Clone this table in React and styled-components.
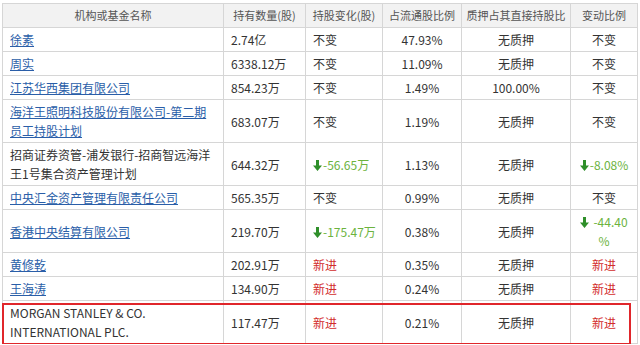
import React from "react";
import styled, { createGlobalStyle } from "styled-components";

const Global = createGlobalStyle`
  html, body { margin: 0; padding: 0; background: #fff; }
  body { font-family: "Microsoft YaHei", "Noto Sans CJK SC", "Noto Sans", sans-serif; }
`;

const Wrap = styled.div`
  position: relative;
  width: 635px;
  margin: 3px 0 0 2px;
`;

const Table = styled.table`
  width: 635px;
  table-layout: fixed;
  border-collapse: collapse;
  font-size: 12px;
  color: #333;
`;

const Th = styled.th`
  background: #f2f2f2;
  color: #555;
  font-weight: normal;
  font-size: 11px;
  border: 1px solid #d6d6d6;
  padding: 2px 2px;
  line-height: 19px;
  text-align: center;
  white-space: nowrap;
`;

const Td = styled.td`
  border: 1px solid #d6d6d6;
  padding: 2px ${(p) => (p.$align === "left" ? "7px" : "2px")};
  line-height: 19px;
  text-align: ${(p) => p.$align || "center"};
  white-space: ${(p) => (p.$nowrap ? "nowrap" : "normal")};
  color: ${(p) => (p.$tone === "red" ? "#d22c2c" : p.$tone === "green" ? "#6cb33e" : "#333")};
  vertical-align: middle;
`;

const NameLink = styled.a`
  color: #2a5ea8;
  text-decoration: underline;
  cursor: pointer;
`;

const Highlight = styled.div`
  position: absolute;
  left: 0;
  right: 6px;
  bottom: -1px;
  height: 42px;
  border: 2px solid #e0262b;
  box-sizing: border-box;
  pointer-events: none;
`;

const ArrowSvg = styled.svg`
  display: inline-block;
  vertical-align: -1px;
  margin-right: ${(p) => p.$gap || 1}px;
`;

const Down = ({ gap }) => (
  <ArrowSvg $gap={gap} width="9" height="11" viewBox="0 0 9 11">
    <path d="M3 0 H6 V5.5 H9 L4.5 11 L0 5.5 H3 Z" fill="#2f8f2a" />
  </ArrowSvg>
);

const cols = [221, 82, 77, 79, 109, 67];

const rows = [
  { name: "徐素", link: true, qty: "2.74亿", chg: "不变", pct: "47.93%", pledge: "无质押", ratio: "不变" },
  { name: "周实", link: true, qty: "6338.12万", chg: "不变", pct: "11.09%", pledge: "无质押", ratio: "不变" },
  { name: "江苏华西集团有限公司", link: true, qty: "854.23万", chg: "不变", pct: "1.49%", pledge: "100.00%", ratio: "不变" },
  { name: "海洋王照明科技股份有限公司-第二期员工持股计划", link: true, qty: "683.07万", chg: "不变", pct: "1.19%", pledge: "无质押", ratio: "不变" },
  { name: "招商证券资管-浦发银行-招商智远海洋王1号集合资产管理计划", link: false, qty: "644.32万", chg: "-56.65万", chgDown: true, pct: "1.13%", pledge: "无质押", ratio: "-8.08%", ratioDown: true },
  { name: "中央汇金资产管理有限责任公司", link: true, qty: "565.35万", chg: "不变", pct: "0.99%", pledge: "无质押", ratio: "不变" },
  { name: "香港中央结算有限公司", link: true, qty: "219.70万", chg: "-175.47万", chgDown: true, pct: "0.38%", pledge: "无质押", ratio: "-44.40", ratioDown: true, ratioWrap: true },
  { name: "黄修乾", link: true, qty: "202.91万", chg: "新进", chgNew: true, pct: "0.35%", pledge: "无质押", ratio: "新进", ratioNew: true },
  { name: "王海涛", link: true, qty: "134.90万", chg: "新进", chgNew: true, pct: "0.24%", pledge: "无质押", ratio: "新进", ratioNew: true },
  { name: "MORGAN STANLEY & CO. INTERNATIONAL PLC.", link: false, qty: "117.47万", chg: "新进", chgNew: true, pct: "0.21%", pledge: "无质押", ratio: "新进", ratioNew: true },
];

export default function App() {
  return (
    <>
      <Global />
      <Wrap>
        <Table>
          <colgroup>
            {cols.map((w, i) => (
              <col key={i} style={{ width: w }} />
            ))}
          </colgroup>
          <thead>
            <tr>
              <Th>机构或基金名称</Th>
              <Th>持有数量(股)</Th>
              <Th>持股变化(股)</Th>
              <Th>占流通股比例</Th>
              <Th>质押占其直接持股比</Th>
              <Th>变动比例</Th>
            </tr>
          </thead>
          <tbody>
            {rows.map((r, i) => (
              <tr key={i}>
                <Td $align="left">{r.link ? <NameLink>{r.name}</NameLink> : r.name}</Td>
                <Td $align="left">{r.qty}</Td>
                <Td $align="left" $nowrap $tone={r.chgDown ? "green" : r.chgNew ? "red" : undefined}>
                  {r.chgDown && <Down gap={1} />}
                  {r.chg}
                </Td>
                <Td>{r.pct}</Td>
                <Td>{r.pledge}</Td>
                <Td $tone={r.ratioDown ? "green" : r.ratioNew ? "red" : undefined}>
                  {r.ratioDown && <Down gap={r.ratioWrap ? 4 : 1} />}
                  {r.ratio}
                  {r.ratioWrap && (
                    <>
                      <br />%
                    </>
                  )}
                </Td>
              </tr>
            ))}
          </tbody>
        </Table>
        <Highlight />
      </Wrap>
    </>
  );
}
